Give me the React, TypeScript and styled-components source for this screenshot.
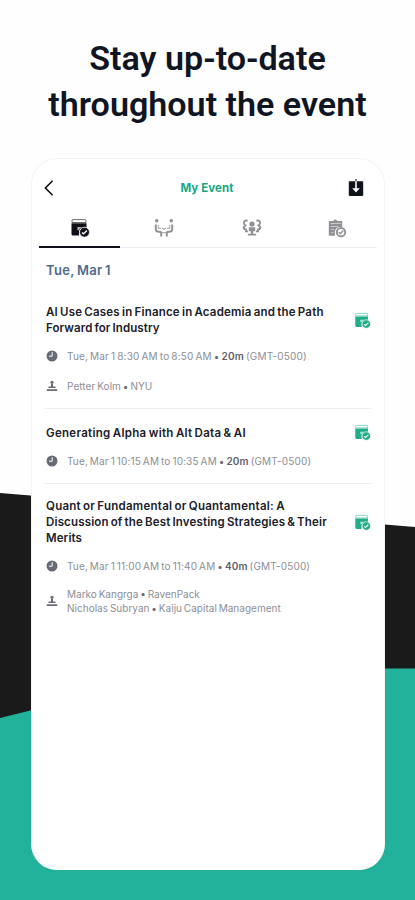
import React from "react";
import styled, { createGlobalStyle } from "styled-components";

const Global = createGlobalStyle`
  * { box-sizing: border-box; }
  body { margin: 0; background: #fefefe; font-family: Inter, "Liberation Sans", sans-serif; }
`;

const Page = styled.main`
  position: relative;
  z-index: 0;
  width: 415px;
  height: 900px;
  overflow: hidden;
  display: flex;
  flex-direction: column;
  align-items: center;
  background: #fefefe;
  &::before, &::after { content: ""; position: absolute; inset: 0; z-index: -1; }
  &::before { background: #1a1a1a; clip-path: polygon(0 493px, 100% 527px, 100% 720px, 0 720px); }
  &::after { background: #22b19b; clip-path: polygon(0 718px, 200px 668.5px, 100% 668.5px, 100% 100%, 0 100%); }
`;

const Headline = styled.h1`
  margin: 35px 0 0;
  height: 123px;
  display: flex;
  flex-direction: column;
  align-items: center;
  font: 600 34.1px/46px Roboto, sans-serif;
  color: #101524;
`;

const Line = styled.span<{ $track?: number }>`
  display: block;
  width: max-content;
  white-space: pre;
  letter-spacing: ${(p) => p.$track ?? 0}px;
`;

const Card = styled.section`
  width: 354px;
  height: 712px;
  margin-left: 1px;
  padding: 0 7px;
  border: 1.5px solid #f3f4f4;
  border-bottom-color: #fff;
  border-radius: 26px;
  background: #fff;
`;

const Header = styled.header`
  height: 49px;
  padding: 9px 13px 0 3px;
  display: grid;
  grid-template-columns: 16px 1fr 16px;
  align-items: center;
`;

const Heading = styled.h2`
  margin: 0;
  padding-left: 8px;
  display: flex;
  justify-content: center;
  font-size: 11.5px;
  font-weight: 700;
  color: #16a884;
`;

const Tabs = styled.nav`
  height: 40px;
  display: grid;
  grid-template-columns: 81px 87px 88px 1fr;
  border-bottom: 1px solid #eeeff0;
`;

const Tab = styled.div<{ $active?: boolean }>`
  height: 40px;
  padding: 2px 0 0 1px;
  display: flex;
  align-items: center;
  justify-content: center;
  border-bottom: 2px solid ${(p) => (p.$active ? "#101018" : "transparent")};
  color: ${(p) => (p.$active ? "#101018" : "#909296")};
`;

const Day = styled.h3`
  margin: 0;
  height: 47px;
  padding: 13px 0 0 7px;
  font-size: 13px;
  line-height: 18px;
  font-weight: 600;
  word-spacing: -1px;
  color: #506b8a;
`;

const Session = styled.article<{ $top: number }>`
  margin: 0 6px;
  padding: ${(p) => p.$top}px 0 15px;
  border-bottom: 1px solid #eeeff0;
  &:last-child { border: 0; }
`;

const TitleRow = styled.div`
  display: flex;
  justify-content: space-between;
  align-items: center;
  padding: 0 0 0 1px;
`;

const Title = styled.h4`
  margin: 0;
  font-size: 11.5px;
  line-height: 16px;
  font-weight: 600;
  word-spacing: -1px;
  color: #20202a;
`;

const Meta = styled.div<{ $gap: number }>`
  margin-top: ${(p) => p.$gap}px;
  display: grid;
  grid-template-columns: 21px 1fr;
  align-items: center;
  padding-left: 1px;
  font-size: 10px;
  line-height: 14px;
  word-spacing: -1px;
  color: #8d8e95;
  b { font-weight: 600; color: #5f6069; }
  i { font-style: normal; color: #6a6b74; }
`;

const Back = () => (
  <svg width="12" height="18" viewBox="0 0 12 18" fill="none" stroke="#111" strokeWidth="1.6">
    <path d="M10.6 1.8 3.4 9l7.2 7.2" />
  </svg>
);

const Download = () => (
  <svg width="16" height="18" viewBox="0 0 16 18">
    <path d="M1.6 2.3h12.8q.8 0 .8.8v12.9q0 1-1 1H1.800q-1 0-1-1V3.100q0-.8.8-.8Z" fill="#10121c" />
    <path d="M7.200 2h1.600v7.200h3L8 13.600 4.200 9.200h3Z" fill="#fff" />
    <path d="M7.200 0h1.600v2.300H7.200Z" fill="#555762" />
  </svg>
);

const Scheduled = ({ size = 20 }: { size?: number }) => (
  <svg width={size} height={size} viewBox="0 0 20 20">
    <path d="M2 4.500V2.600q0-1 1-1h12q1 0 1 1v1.900Z" fill="none" stroke="currentColor" strokeWidth="1" opacity=".6" />
    <path d="M1.500 5.200h15v4.300h-3.500q-3.500 1-4 4V17.500H3q-1.500 0-1.500-1.500Z" fill="currentColor" />
    <path d="M7.500 9h4.500q-2.600 1.200-3.200 3.200H7.500Z" fill="#fff" opacity=".7" />
    <circle cx="14.500" cy="14.200" r="5" fill="currentColor" stroke="#fff" strokeWidth=".8" />
    <path d="m12 14.500 1.600 1.400 3.300-3.500" fill="none" stroke="#fff" strokeWidth="1.400" />
  </svg>
);

const Meeting = () => (
  <svg width="20" height="20" viewBox="0 0 20 20" fill="none" stroke="currentColor" strokeWidth="1.9">
    <circle cx="2.700" cy="2.800" r="1.800" fill="currentColor" stroke="none" />
    <circle cx="17.300" cy="2.800" r="1.800" fill="currentColor" stroke="none" />
    <path d="M1.800 6.500v4.300q0 3 2.800 3h1q1.600 0 1.600 1.500V18.500M18.200 6.500v4.300q0 3-2.800 3h-1q-1.600 0-1.600 1.500V18.500" />
    <path d="M4.300 7v3.300H7M15.700 7v3.300H13M8 14.600h4" strokeWidth="1.200" opacity=".7" />
    <path d="m7.800 9.900 2.200 1.500 2.200-1.500" strokeWidth="1" />
  </svg>
);

const Speakers = () => (
  <svg width="20" height="20" viewBox="0 0 20 20" fill="currentColor">
    <circle cx="10" cy="6" r="2.600" />
    <path d="M6.800 9.200h6.400v4H11.200v2.500h3v1.700H5.800v-1.700h3v-2.500h-2Z" />
    <path d="M5.600 2.700Q2 2 2 4.500t1.400 3l-1.800 2q.4 2 2.400 2v1.900h2M14.400 2.700Q18 2 18 4.500t-1.400 3l1.800 2q-.4 2-2.400 2v1.900h-2" fill="none" stroke="currentColor" strokeWidth="1.900" />
  </svg>
);

const Checklist = () => (
  <svg width="20" height="20" viewBox="0 0 20 20">
    <path d="M1.800 3H6l2.300-1.800L10.600 3h4.600v6h-3.500q-3 1-3.800 4v4.700H1.800Z" fill="currentColor" />
    <path d="M3.500 5.500H14M3.500 8.500H11M4 11.500h3M4 14.500h2.500" stroke="#fff" strokeWidth=".5" />
    <circle cx="14" cy="14.200" r="4.200" fill="#fff" stroke="currentColor" strokeWidth="1.900" />
    <path d="m11.700 14.300 1.600 1.500 3-3.200" fill="none" stroke="currentColor" strokeWidth="1.500" />
  </svg>
);

const Clock = () => (
  <svg width="12" height="12" viewBox="0 0 12 12">
    <circle cx="6" cy="6" r="5.500" fill="#686a76" />
    <path d="M6.200 2.200v4H3" fill="none" stroke="#fff" strokeWidth="1" />
  </svg>
);

const Podium = () => (
  <svg width="12" height="12" viewBox="0 0 12 12" fill="#686a76">
    <circle cx="6" cy="2.300" r="1.500" />
    <path d="M5 3.500h2v3h2.500v1.600h-7V6.500H5ZM.8 9.200h10.400v1.700H.8Z" />
  </svg>
);

const Booked = styled.span`
  display: flex;
  color: #20ad87;
`;

type Text = [string, number];
interface Item {
  title: Text[];
  time: string;
  length: string;
  track: number;
  top: number;
  speakerGap?: number;
  speakers?: { name: string; org: string; track: number }[];
}

const sessions: Item[] = [
  {
    title: [["AI Use Cases in Finance in Academia and the Path", 0.2], ["Forward for Industry", 0.1]],
    time: "Tue, Mar 1 8:30 AM to 8:50 AM", length: "20m", track: 0.18, top: 9, speakerGap: 16,
    speakers: [{ name: "Petter Kolm", org: "NYU", track: 0.06 }],
  },
  {
    title: [["Generating Alpha with Alt Data & AI", 0.3]],
    time: "Tue, Mar 1 10:15 AM to 10:35 AM", length: "20m", track: 0.14, top: 15,
  },
  {
    title: [["Quant or Fundamental or Quantamental: A", 0.26], ["Discussion of the Best Investing Strategies & Their", 0.16], ["Merits", 0.1]],
    time: "Tue, Mar 1 11:00 AM to 11:40 AM", length: "40m", track: 0.14, top: 14, speakerGap: 14,
    speakers: [
      { name: "Marko Kangrga", org: "RavenPack", track: 0 },
      { name: "Nicholas Subryan", org: "Kaiju Capital Management", track: 0.02 },
    ],
  },
];

export default function App() {
  return (
    <>
      <Global />
      <Page>
        <Headline>
          <Line>Stay up-to-date</Line>
          <Line>throughout the event</Line>
        </Headline>
        <Card>
          <Header>
            <Back />
            <Heading><Line $track={0.1}>My Event</Line></Heading>
            <Download />
          </Header>
          <Tabs>
            <Tab $active><Scheduled /></Tab>
            <Tab><Meeting /></Tab>
            <Tab><Speakers /></Tab>
            <Tab><Checklist /></Tab>
          </Tabs>
          <Day><Line $track={0.3}>Tue, Mar 1</Line></Day>
          {sessions.map((s) => (
            <Session key={s.time} $top={s.top}>
              <TitleRow>
                <Title>{s.title.map(([t, k]) => <Line key={t} $track={k}>{t}</Line>)}</Title>
                <Booked><Scheduled size={17} /></Booked>
              </TitleRow>
              <Meta $gap={13}>
                <Clock />
                <Line $track={s.track}>{s.time} <i>•</i> <b>{s.length}</b> (GMT-0500)</Line>
              </Meta>
              {s.speakers && (
                <Meta $gap={s.speakerGap ?? 16}>
                  <Podium />
                  <div>
                    {s.speakers.map((p) => (
                      <Line key={p.name} $track={p.track}>{p.name} <i>•</i> {p.org}</Line>
                    ))}
                  </div>
                </Meta>
              )}
            </Session>
          ))}
        </Card>
      </Page>
    </>
  );
}
